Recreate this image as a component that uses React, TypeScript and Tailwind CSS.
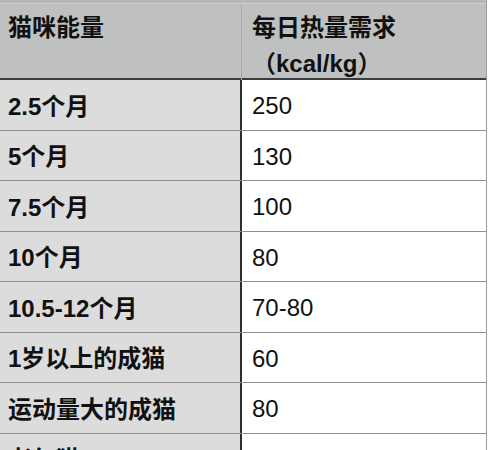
const ROWS: { label: string; value: string }[] = [
  { label: '2.5个月', value: '250' },
  { label: '5个月', value: '130' },
  { label: '7.5个月', value: '100' },
  { label: '10个月', value: '80' },
  { label: '10.5-12个月', value: '70-80' },
  { label: '1岁以上的成猫', value: '60' },
  { label: '运动量大的成猫', value: '80' },
  { label: '老年猫', value: '45' },
]

const FONT = "font-['Liberation_Sans','Noto_Sans_CJK_SC',sans-serif]"

export default function App() {
  return (
    <div className={`w-[490px] h-[450px] overflow-hidden bg-white text-[#111] ${FONT}`}>
      <div className="w-[487px] border-r border-[#9a9a9a]">
        {/* Header */}
        <div className="h-[3px] bg-[#b6b7b6]" />
        <div className="h-px bg-[#cfd0cf]" />
        <div className="grid grid-cols-[242px_1fr] h-[76px] bg-[#bfc1c0] border-b-2 border-[#3c3c3c] text-[24px] leading-[36px] font-bold">
          <div className="pl-[8px] pt-[6px] border-r border-[#a9aaa9]">猫咪能量</div>
          <div className="pl-[10px] pt-[6px]">
            每日热量需求
            <br />
            （kcal/kg）
          </div>
        </div>

        {/* Rows */}
        {ROWS.map((row) => (
          <div
            key={row.label}
            className="grid grid-cols-[242px_1fr] h-[50.5px] border-b border-[#8f8f8f] text-[24px]"
          >
            <div className="flex items-center pl-[8px] pt-[4px] bg-[#dcdcdc] border-r-2 border-[#2e2e2e] font-bold">
              {row.label}
            </div>
            <div className="flex items-center pl-[10px] pt-[3px] bg-white">{row.value}</div>
          </div>
        ))}
      </div>
    </div>
  )
}
